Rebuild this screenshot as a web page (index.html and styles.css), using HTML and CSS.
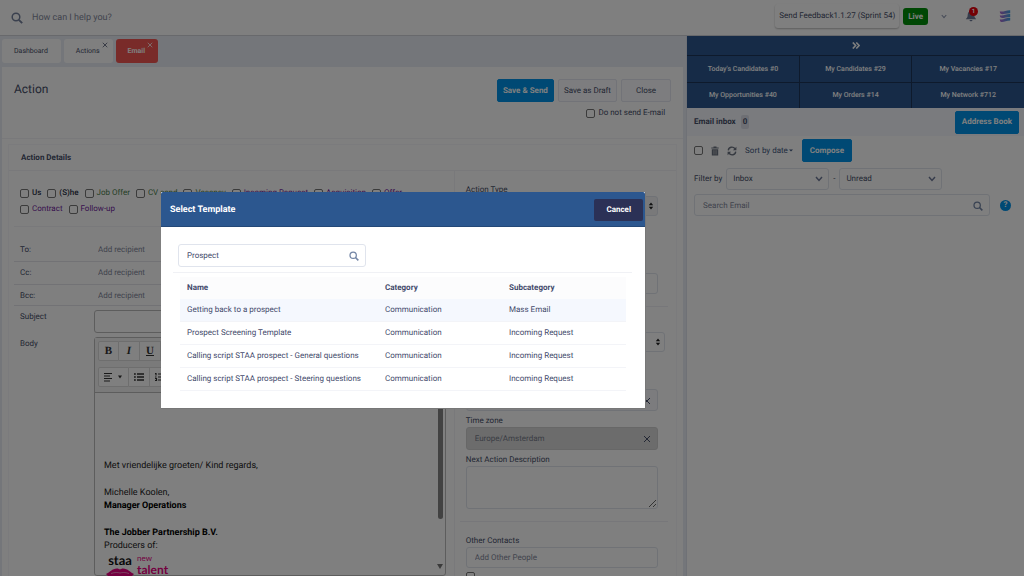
FILE: index.html
```html
<!DOCTYPE html>
<html lang="en">
<head>
<meta charset="utf-8">
<title>Action</title>
<link rel="stylesheet" href="styles.css">
</head>
<body>
<svg width="0" height="0" class="defs" aria-hidden="true">
  <symbol id="search" viewBox="0 0 12 12"><circle cx="5" cy="5" r="3.8" fill="none" stroke="currentColor" stroke-width="1.5"/><path d="M7.8 7.8L11.2 11.2" stroke="currentColor" stroke-width="1.9"/></symbol>
  <symbol id="cross" viewBox="0 0 8 8"><path d="M1 1L7 7M7 1L1 7" fill="none" stroke="currentColor" stroke-width="1"/></symbol>
  <symbol id="chev" viewBox="0 0 8 6"><path d="M1 1L4 4.4L7 1" fill="none" stroke="currentColor" stroke-width="1.5"/></symbol>
  <symbol id="sort" viewBox="0 0 6 8"><path d="M3 0.5L5.2 3.3H.8zM3 7.5L.8 4.7H5.2z" fill="currentColor"/></symbol>
</svg>
<div class="app">
  <header class="topbar">
    <svg class="i12 slate"><use href="#search"/></svg>
    <input class="top-search" type="search" placeholder="How can I help you?" aria-label="How can I help you?">
    <button class="feedback">Send Feedback1.1.27 (Sprint 54)</button>
    <span class="live">Live</span>
    <button class="plain caret" aria-label="More"><svg class="i6 slate"><use href="#chev"/></svg></button>
    <button class="plain bell" aria-label="Notifications">
      <svg width="12" height="12" viewBox="0 0 12 12"><path d="M6 .8C3.6 1.1 2.7 3 2.7 5C2.7 7.2 1.8 8 .8 9.2H11.2C10.2 8 9.3 7.2 9.3 5C9.3 3 8.4 1.1 6 .8zM4.5 10H7.5C7.4 11.8 4.6 11.8 4.5 10z" fill="#6d7896"/></svg>
      <span class="badge">1</span>
    </button>
    <svg class="brand" width="12" height="14" viewBox="0 0 12 14" aria-hidden="true">
      <defs><linearGradient id="bg1"><stop offset="0" stop-color="#b06ad0"/><stop offset="1" stop-color="#3f9fe0"/></linearGradient></defs>
      <path d="M.8 2.2C3 3.6 7 1 11.2 1.2V4.2C7 4 3.5 6 1.6 4.8Q.8 3.8.8 2.2zM.8 6.2C4 7.3 7 4.8 11.2 5V7.9C7 7.7 4 9.8 1.6 8.6Q.8 7.6.8 6.2zM.8 10.2C4 11.2 7 8.6 11.2 8.8V11.6C7 11.6 4 13.8 1.6 12.7Q.8 11.7.8 10.2z" fill="url(#bg1)"/>
    </svg>
  </header>

  <div class="columns">
    <main class="main">
      <nav class="tabs">
        <a class="tab" href="#dashboard">Dashboard</a>
        <a class="tab closable" href="#actions">Actions<svg class="tab-x"><use href="#cross"/></svg></a>
        <a class="tab closable active" href="#email">Email<svg class="tab-x"><use href="#cross"/></svg></a>
      </nav>
      <section class="card">
        <div class="card-head">
          <h1>Action</h1>
          <div class="head-actions">
            <div class="buttons">
              <button class="btn primary save">Save &amp; Send</button>
              <button class="btn draft">Save as Draft</button>
              <button class="btn close">Close</button>
            </div>
            <label class="check nosend"><input type="checkbox">Do not send E-mail</label>
          </div>
        </div>
        <div class="portlet">
          <h2>Action Details</h2>
          <div class="split">
            <div class="left">
              <div class="checks">
                <label class="check dark"><input type="checkbox">Us</label>
                <label class="check dark"><input type="checkbox">(S)he</label>
                <label class="check green"><input type="checkbox">Job Offer</label>
                <label class="check green"><input type="checkbox">CV send</label>
                <label class="check green"><input type="checkbox">Vacancy</label>
                <label class="check purple"><input type="checkbox">Incoming Request</label>
                <label class="check purple"><input type="checkbox">Acquisition</label>
                <label class="check purple"><input type="checkbox">Offer</label>
                <label class="check purple"><input type="checkbox">Contract</label>
                <label class="check purple"><input type="checkbox">Follow-up</label>
              </div>
              <div class="recips">
                <div class="recip"><label for="to">To:</label><input id="to" placeholder="Add recipient"></div>
                <div class="recip"><label for="cc">Cc:</label><input id="cc" placeholder="Add recipient"></div>
                <div class="recip last"><label for="bcc">Bcc:</label><input id="bcc" placeholder="Add recipient"></div>
              </div>
              <div class="form-row"><label for="subject">Subject</label><input id="subject" class="field subject"></div>
              <div class="form-row"><span class="body-label">Body</span>
                <div class="editor">
                  <div class="toolbar">
                    <div class="tools">
                      <button class="tool serif" aria-label="Bold"><b>B</b></button><button class="tool serif" aria-label="Italic"><b><i>I</i></b></button><button class="tool serif" aria-label="Underline"><b><u>U</u></b></button>
                    </div>
                    <div class="tools">
                      <button class="tool wide" aria-label="Align"><svg width="22" height="10" viewBox="0 0 22 10"><path d="M1 1.5H9M1 4H7M1 6.5H9M1 9H7" stroke="#333" stroke-width="1.2"/><path d="M15 3.5H19L17 6.5z" fill="#333"/></svg></button><button class="tool" aria-label="Bulleted list"><svg width="10" height="8" viewBox="0 0 10 8"><path d="M0 1H1.8M0 4H1.8M0 7H1.8M3 1H10M3 4H10M3 7H10" stroke="#333" stroke-width="1.5"/></svg></button><button class="tool" aria-label="Numbered list"><svg width="10" height="8" viewBox="0 0 10 8"><path d="M0 .5H1V2.5M0 4H1.5M0 5.5H1.5V7.5H0M3 1H10M3 4H10M3 7H10" fill="none" stroke="#333" stroke-width="1.2"/></svg></button>
                    </div>
                  </div>
                  <div class="canvas">
                    <div class="mail">
                      <p>Met vriendelijke groeten/ Kind regards,</p>
                      <p>Michelle Koolen,<br><b>Manager Operations</b></p>
                      <p><b>The Jobber Partnership B.V.</b><br>Producers of:</p>
                      <div class="signature">
                        <div class="staa">staa<svg width="28" height="8" viewBox="0 0 28 8"><path d="M0 6C4 4.500 6 .5 11 .5C12.5 .5 13 1.3 14 1.3C15 1.3 15.5 .5 17 .5C22 .5 24 4.500 28 6L26 8H2z" fill="#e6007e"/><path d="M5 5.500C9 4 12 4.500 14 5C16 4.500 19 4 23 5.500" fill="none" stroke="#fff" stroke-width=".5"/></svg></div>
                        <div class="talent"><span>new</span><b>talent</b></div>
                      </div>
                    </div>
                    <div class="scroll"><span class="thumb"></span><svg width="6" height="5" viewBox="0 0 6 5"><path d="M0 0H6L3 5z" fill="#777"/></svg></div>
                  </div>
                </div>
              </div>
            </div>
            <div class="right">
              <label for="atype">Action Type</label>
              <div class="pick"><select id="atype" class="field gray"><option></option></select><svg class="updown"><use href="#sort"/></svg></div>
              <input class="field second" aria-label="Subtype">
              <hr>
              <div class="pick broad"><select class="field" aria-label="Status"><option></option></select><svg class="updown"><use href="#sort"/></svg></div>
              <div class="pick date"><input class="field" aria-label="Next action date"><svg class="clear"><use href="#cross"/></svg></div>
              <label for="tz">Time zone</label>
              <div class="pick"><input id="tz" class="field zone" value="Europe/Amsterdam"><svg class="clear"><use href="#cross"/></svg></div>
              <label for="desc">Next Action Description</label>
              <textarea id="desc" class="field"></textarea>
              <hr>
              <label for="others" class="others">Other Contacts</label>
              <input id="others" class="field people" placeholder="Add Other People">
              <label class="check extra"><input type="checkbox" aria-label="Include"></label>
            </div>
          </div>
        </div>
      </section>
    </main>

    <aside class="side">
      <button class="collapse" aria-label="Collapse"><svg width="8" height="7" viewBox="0 0 8 7"><path d="M.8.5L3.6 3.5L.8 6.5M4.3.5L7.1 3.5L4.3 6.5" fill="none" stroke="#fff" stroke-width="1.6"/></svg></button>
      <nav class="stats">
        <a href="#today">Today's Candidates #0</a><a href="#cand">My Candidates #29</a><a href="#vac">My Vacancies #17</a>
        <a href="#opp">My Opportunities #40</a><a href="#orders">My Orders #14</a><a href="#net">My Network #712</a>
      </nav>
      <div class="inbox-head"><h2>Email inbox</h2><span class="count">0</span><button class="btn primary book">Address Book</button></div>
      <div class="inbox">
        <div class="line mailtools">
          <input type="checkbox" aria-label="Select all">
          <button class="plain" aria-label="Delete"><svg width="8" height="10" viewBox="0 0 8 10"><path d="M.3 1.5H2.5V.5H5.5V1.5H7.7V2.6H.3zM.8 3.2H7.2V9.5H.8z" fill="#6b7280"/><path d="M2.7 4.2V8.5M4 4.2V8.5M5.3 4.2V8.5" stroke="#ccc" stroke-width=".5"/></svg></button>
          <button class="plain" aria-label="Refresh"><svg width="10" height="10" viewBox="0 0 10 10"><path d="M1.3 4.3C1.7 .8 6 .2 8 2.7M8.7 5.7C8.3 9.2 4 9.8 2 7.3" fill="none" stroke="#6b7280" stroke-width="1.4"/><path d="M9.4.8V4.3H5.9zM.6 9.2V5.7H4.1z" fill="#6b7280"/></svg></button>
          <button class="plain sortby">Sort by date <svg width="4" height="3" viewBox="0 0 4 3"><path d="M0 .5H4L2 2.5z" fill="currentColor"/></svg></button>
          <button class="btn primary compose">Compose</button>
        </div>
        <div class="line filter">
          <label for="box">Filter by</label>
          <div class="pick"><select id="box" class="field"><option>Inbox</option></select><svg class="down"><use href="#chev"/></svg></div>
          <span>-</span>
          <div class="pick"><select class="field" aria-label="Read state"><option>Unread</option></select><svg class="down"><use href="#chev"/></svg></div>
        </div>
        <div class="line find">
          <div class="pick"><input class="field" type="search" placeholder="Search Email" aria-label="Search Email"><svg class="glass"><use href="#search"/></svg></div>
          <button class="help" aria-label="Help">?</button>
        </div>
      </div>
    </aside>
  </div>
</div>

<div class="backdrop"></div>
<div class="modal" role="dialog" aria-labelledby="mt">
  <div class="modal-head"><h2 id="mt">Select Template</h2><button class="cancel">Cancel</button></div>
  <div class="modal-body">
    <div class="modal-search"><div class="pick"><input class="field" value="Prospect" aria-label="Search templates"><svg class="glass"><use href="#search"/></svg></div></div>
    <table>
      <thead><tr><th class="c1">Name</th><th class="c2">Category</th><th>Subcategory</th></tr></thead>
      <tbody>
        <tr class="hover"><td>Getting back to a prospect</td><td>Communication</td><td>Mass Email</td></tr>
        <tr><td>Prospect Screening Template</td><td>Communication</td><td>Incoming Request</td></tr>
        <tr><td>Calling script STAA prospect - General questions</td><td>Communication</td><td>Incoming Request</td></tr>
        <tr><td>Calling script STAA prospect - Steering questions</td><td>Communication</td><td>Incoming Request</td></tr>
      </tbody>
    </table>
  </div>
</div>
</body>
</html>
```
FILE: styles.css
```css
* { box-sizing: border-box; }
body { margin: 0; font: 8px/10px Roboto, sans-serif; color: #464e68; background: #fff; overflow: hidden; text-rendering: geometricPrecision; }
h1, h2, p { margin: 0; }
button, input, select, textarea { font: inherit; color: inherit; margin: 0; text-rendering: inherit; }
a { color: inherit; text-decoration: none; }
input::placeholder { color: #83889b; opacity: 1; }
.defs { position: absolute; }
.app { height: 100vh; display: flex; flex-direction: column; overflow: hidden; }
.plain { background: none; border: 0; padding: 0; display: flex; align-items: center; }
.i12 { width: 12px; height: 12px; }
.i6 { width: 6px; height: 5px; }
.slate { color: #74809c; }
.caret .slate { color: #8f99b0; }

.topbar { display: flex; align-items: center; flex: none; height: 36px; padding: 0 13px 3px 11px; border-bottom: 1px solid #d0d3d9; background: #fff; }
.topbar > .i12 { margin-top: 3px; }
.top-search { flex: 1; border: 0; background: none; font-size: 9px; margin: 4px 0 0 9px; padding: 0; outline: 0; }
.feedback { height: 24px; padding: 0 4px; border: 0; border-radius: 3px; background: #fff; box-shadow: 0 1px 2px #bbb; }
.live { background: #008f08; color: #fff; font-weight: 700; border-radius: 3px; padding: 4px 5px; margin-left: 4px; line-height: 9px; }
.caret { margin-left: 13px; }
.bell { position: relative; margin-left: 18px; }
.badge { position: absolute; left: 4px; top: -3px; width: 9px; height: 9px; border-radius: 50%; background: #e8000b; color: #fff; font: 700 6px/9px Roboto, sans-serif; text-align: center; }
.brand { margin-left: 22px; }

.columns { display: flex; flex: 1; min-height: 0; }
.main { flex: 1; min-width: 0; background: #e9edf5; padding: 3px 3px 0 2px; }
.tabs { display: flex; gap: 3px; height: 24px; font-size: 7px; }
.tab { background: #fff; border-radius: 3px; padding: 7px 13px 7px 12px; position: relative; }
.tab.active { background: #f25752; color: #fff; font-weight: 700; }
.tab-x { position: absolute; top: 3px; right: 5px; width: 6px; height: 6px; }
.card { background: #fff; margin-top: 4px; padding-bottom: 8px; }
.card-head { display: flex; justify-content: space-between; height: 72px; padding: 12px 12px 0; border-bottom: 1px solid #f3f3f7; }
h1 { font: 400 12px/20px Roboto, sans-serif; }
.head-actions { display: flex; flex-direction: column; align-items: flex-end; gap: 6px; }
.buttons { display: flex; gap: 4px; }
.btn { height: 23px; padding: 0 7px; border: 1px solid #e4e7f0; border-radius: 2px; background: #fafafe; white-space: nowrap; }
.btn.primary { background: #0093e8; border-color: #0093e8; color: #fff; font-weight: 700; }
.btn.save, .btn.draft { padding: 0 5px; }
.btn.close { padding: 0 14px; }
.check { display: inline-flex; align-items: center; gap: 3px; }
input[type=checkbox] { appearance: none; flex: none; width: 9px; height: 9px; border: 1px solid #777; border-radius: 2px; background: #fff; }
.nosend { margin-right: 6px; }
.dark { color: #2a2f45; font-weight: 500; }
.green { color: #4b7f4b; }
.purple { color: #6f1c9c; }

.portlet { margin: 5px 6px 0; border: 1px solid #f6f6fa; }
.portlet h2 { font: 700 8px/25px Roboto, sans-serif; padding-left: 12px; border-bottom: 1px solid #f3f3f7; }
.split { display: grid; grid-template-columns: 2fr 1fr; }
.left { padding: 17px 8px 0 5px; }
.checks { display: flex; flex-wrap: wrap; gap: 6px; padding: 0 0 12px 6px; margin-bottom: 12px; border-bottom: 1px solid #f3f3f7; }
.recip { display: flex; align-items: center; height: 23px; padding-left: 6px; border-bottom: 1px solid #e4e5ea; }
.recip.last { height: 21px; padding-top: 2px; }
.recip input { flex: 1; border: 0; padding: 0; background: none; }
.recip label { flex: none; width: 78px; }
.form-row { display: flex; padding-left: 6px; margin-top: 4px; }
.form-row > label, .body-label { flex: none; width: 74px; padding-top: 2px; }
.field { display: block; width: 100%; height: 22px; padding: 0 8px; border: 1px solid #e0e4ed; border-radius: 3px; background: #fff; outline: 0; }
select.field { appearance: none; }
.field.subject { border-color: #bbb; height: 23px; }
.editor { flex: 1; border: 1px solid #bbb; border-radius: 3px; }
.toolbar { display: flex; flex-direction: column; gap: 6px; height: 55px; padding: 3px; background: #f5f5f5; border-bottom: 1px solid #bbb; }
.tools { display: flex; }
.tool { width: 21px; height: 20px; padding: 0; border: 1px solid #ddd; border-left-width: 0; background: #fff; display: flex; align-items: center; justify-content: center; color: #333; }
.tool:first-child { border-left-width: 1px; border-radius: 2px 0 0 2px; }
.tool.wide { width: 31px; }
.serif { font: 11px/12px "Liberation Serif", serif; }
.canvas { display: flex; justify-content: space-between; height: 182px; }
.mail { padding: 67px 0 0 9px; font-size: 9px; line-height: 13px; color: #222; }
.mail p { margin-bottom: 14px; }
.mail p:nth-child(3) { margin-bottom: 0; }
.mail b { color: #000; }
.signature { display: flex; gap: 3px; padding-left: 2px; }
.staa { display: flex; flex-direction: column; width: 28px; font: 700 13px/15px Lato, sans-serif; color: #111; text-align: center; }
.talent { display: flex; flex-direction: column; padding-top: 1px; color: #e6007e; font: 8px/9px Lato, sans-serif; }
.mail .talent b { color: #e6007e; font-size: 12px; line-height: 13px; }
.scroll { display: flex; flex-direction: column; justify-content: space-between; align-items: center; width: 9px; padding-bottom: 6px; }
.thumb { width: 5px; height: 126px; border-radius: 3px; background: #858585; }

.right { padding: 14px 18px 0 11px; border-left: 1px solid #f3f3f7; }
.right label { display: block; margin: 5px 0 1px; }
.right > label:first-child { margin-top: 0; }
.right hr { margin: 12px -10px 0 -6px; border: 0; border-top: 1px solid #eeeff4; }
.pick { position: relative; }
.pick svg { position: absolute; pointer-events: none; }
.right select { height: 20px; }
.gray { background: #f2f3f5; }
.updown { width: 6px; height: 8px; right: 4px; top: 6px; color: #222; }
.clear { width: 8px; height: 8px; right: 7px; top: 8px; }
.second { height: 21px; margin-top: 57px; }
.broad { margin: 25px -7px 37px 0; }
.date .field { background: #f8f9fc; }
.right .zone { height: 23px; background: #d8d8d8; border-color: #cfcfcf; color: #777c8a; }
textarea.field { height: 43px; resize: vertical; }
.right .others { margin-top: 14px; }
.people { height: 21px; }
.right .extra { margin-top: 4px; }

.side { flex: none; width: 33%; background: #fff; border-left: 1px solid #dfe3ec; }
.collapse { display: flex; align-items: center; justify-content: center; width: 100%; height: 19px; padding: 0; border: 0; background: #2c578f; }
.stats { display: grid; grid-template-columns: repeat(3, 1fr); gap: 1px; padding-top: 1px; background: #1c3558; font-size: 7px; font-weight: 500; }
.stats a { background: #2c578f; color: #fff; line-height: 26px; text-align: center; }
.stats a:nth-child(n+4) { line-height: 25px; }
.inbox-head { display: flex; align-items: center; height: 28px; padding: 0 5px 0 7px; background: #f5f7fc; }
.inbox-head h2 { font: 700 8px/10px Roboto, sans-serif; }
.count { margin-left: 5px; padding: 2px; border-radius: 2px; background: #dcdfe9; font-weight: 700; }
.book { margin-left: auto; padding: 0 6px; }
.inbox { padding: 3px 6px 0 7px; }
.line { display: flex; align-items: center; }
.mailtools { gap: 8px; }
.sortby { color: #44597f; gap: 1px; }
.compose { margin-left: 1px; }
.filter { gap: 4px; margin-top: 6px; }
.filter .pick { flex: 0 1 103px; }
.filter select { padding: 0 6px; }
.down { width: 8px; height: 6px; right: 6px; top: 8px; color: #6d7896; }
.find { gap: 10px; margin: 4px 7px 0 0; }
.find .pick { flex: 1; }
.glass { width: 10px; height: 10px; right: 7px; top: 7px; color: #7385a5; }
.help { width: 11px; height: 11px; padding: 0; border: 0; border-radius: 50%; background: #0093e8; color: #fff; font-weight: 700; }

.backdrop { position: fixed; inset: 0; background: rgba(0, 0, 0, .5); }
.modal { position: absolute; left: 161px; top: 192px; width: 485px; background: #fff; border: 1px solid #777; border-width: 0 1px 1px 0; color: #434a6b; }
.modal-head { display: flex; align-items: center; justify-content: space-between; height: 35px; padding: 1px 2px 0 9px; background: #2c578f; border-bottom: 1px solid #244877; border-radius: 2px 2px 0 0; color: #fff; }
.modal-head h2 { font: 700 9px/12px Roboto, sans-serif; }
.cancel { height: 22px; padding: 0 12px; border: 0; border-radius: 2px; background: #2b3156; color: #fff; font-weight: 700; }
.modal-body { padding: 17px 13px 17px 12px; }
.modal-search { padding: 0 0 5px 5px; border-bottom: 1px solid #f0f1f5; }
.modal-search .pick { width: 188px; }
.modal .field { height: 23px; }
table { width: calc(100% - 13px); margin: 4px 6px 0 7px; border-spacing: 0; table-layout: fixed; }
th, td { height: 23px; padding: 0 0 0 7px; text-align: left; border-bottom: 1px solid #f3f4f8; }
th { height: 22px; font-weight: 700; background: #fcfcfd; border: 0; }
.c1 { width: 198px; }
.c2 { width: 124px; }
.hover td { background: #f5f8fe; }
```
